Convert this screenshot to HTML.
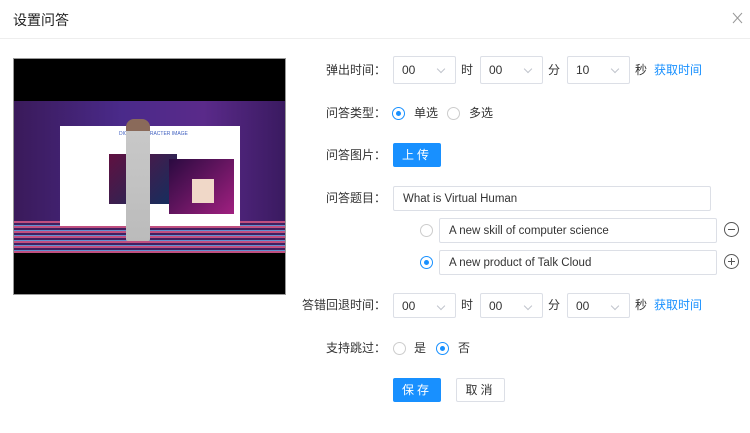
<!DOCTYPE html>
<html><head><meta charset="utf-8"><style>
*{box-sizing:border-box;margin:0;padding:0}
body{width:750px;height:433px;background:#fff;font-family:"Liberation Sans","Noto Sans CJK SC",sans-serif;color:#333;position:relative;overflow:hidden;font-size:12px}
.a{position:absolute}
.title{left:13px;top:10px;font-size:14px;color:#222}
.hr{left:0;top:38px;width:750px;height:1px;background:#eee}
.lbl{text-align:right;width:120px;font-size:12px;color:#333;line-height:14px}
.sel{height:28px;border:1px solid #dcdfe6;border-radius:2px;width:63px;padding-left:8px;display:flex;align-items:center;font-size:12px}
.sel:after{content:"";position:absolute;right:11px;top:9px;width:5px;height:5px;border-right:1px solid #c0c4cc;border-bottom:1px solid #c0c4cc;transform:rotate(45deg)}
.inp{height:25px;border:1px solid #dcdfe6;border-radius:2px;padding-left:9px;display:flex;align-items:center;font-size:11.5px;color:#333}
.rad{width:13px;height:13px;border:1px solid #ccc;border-radius:50%}
.rad.on{border-color:#1890ff}
.rad.on:after{content:"";position:absolute;left:3px;top:3px;width:5px;height:5px;border-radius:50%;background:#1890ff}
.btn{height:24px;line-height:24px;text-align:center;border-radius:2px;font-size:12px;letter-spacing:3px}
.link{color:#1890ff}
.ic{width:15px;height:15px;border:1px solid #555;border-radius:50%}
.t{line-height:14px}
</style></head><body>
<div class="a title">设置问答</div>
<svg class="a" style="left:732px;top:12px" width="11" height="12"><path d="M1 1L10 11M10 1L1 11" stroke="#999" stroke-width="1"/></svg>
<div class="a hr"></div>

<div class="a" style="left:13px;top:58px;width:273px;height:237px;border:1px solid #999;background:#000;overflow:hidden">
 <div class="a" style="left:0;top:42px;width:271px;height:152px;background:linear-gradient(90deg,#3a1a5a,#4a2a8a 40%,#5a2a8a 70%,#3a1a60)"></div>
 <div class="a" style="left:0;top:162px;width:271px;height:32px;background:repeating-linear-gradient(180deg,#c05080 0 2px,#402060 2px 4px,#6090d0 4px 5px)"></div>
 <div class="a" style="left:46px;top:67px;width:180px;height:100px;background:#fff"></div>
 <div class="a" style="left:105px;top:72px;font-size:5px;color:#4060c0">DIGITAL CHARACTER IMAGE</div>
 <div class="a" style="left:95px;top:95px;width:68px;height:50px;background:linear-gradient(135deg,#601040,#103060)"></div>
 <div class="a" style="left:155px;top:100px;width:65px;height:55px;background:linear-gradient(135deg,#2a0a40,#a02080)"></div>
 <div class="a" style="left:112px;top:60px;width:24px;height:122px;border-radius:8px 8px 2px 2px;background:linear-gradient(180deg,#8a6a5a 0 10%,#c8c8c8 10%,#bbb)"></div>
 <div class="a" style="left:178px;top:120px;width:22px;height:24px;background:#f0d8c8"></div>
</div>

<div class="a lbl" style="left:266px;top:63px">弹出时间：</div>
<div class="a sel" style="left:393px;top:56px">00</div>
<div class="a t" style="left:461px;top:63px">时</div>
<div class="a sel" style="left:480px;top:56px">00</div>
<div class="a t" style="left:548px;top:63px">分</div>
<div class="a sel" style="left:567px;top:56px">10</div>
<div class="a t" style="left:635px;top:63px">秒</div>
<div class="a link t" style="left:654px;top:63px">获取时间</div>

<div class="a lbl" style="left:266px;top:106px">问答类型：</div>
<div class="a rad on" style="left:392px;top:107px"></div>
<div class="a t" style="left:414px;top:106px">单选</div>
<div class="a rad" style="left:447px;top:107px"></div>
<div class="a t" style="left:469px;top:106px">多选</div>

<div class="a lbl" style="left:266px;top:148px">问答图片：</div>
<div class="a btn" style="left:393px;top:143px;width:48px;background:#1890ff;color:#fff">上传</div>

<div class="a lbl" style="left:266px;top:191px">问答题目：</div>
<div class="a inp" style="left:393px;top:186px;width:318px">What is Virtual Human</div>
<div class="a rad" style="left:420px;top:224px"></div>
<div class="a inp" style="left:439px;top:218px;width:278px">A new skill of computer science</div>
<div class="a ic" style="left:724px;top:222px"><div class="a" style="left:3px;top:6px;width:7px;height:1px;background:#555"></div></div>
<div class="a rad on" style="left:420px;top:256px"></div>
<div class="a inp" style="left:439px;top:250px;width:278px">A new product of Talk Cloud</div>
<div class="a ic" style="left:724px;top:254px"><div class="a" style="left:3px;top:6px;width:7px;height:1px;background:#555"></div><div class="a" style="left:6px;top:3px;width:1px;height:7px;background:#555"></div></div>

<div class="a lbl" style="left:266px;top:298px">答错回退时间：</div>
<div class="a sel" style="left:393px;top:293px;height:25px">00</div>
<div class="a t" style="left:461px;top:298px">时</div>
<div class="a sel" style="left:480px;top:293px;height:25px">00</div>
<div class="a t" style="left:548px;top:298px">分</div>
<div class="a sel" style="left:567px;top:293px;height:25px">00</div>
<div class="a t" style="left:635px;top:298px">秒</div>
<div class="a link t" style="left:654px;top:298px">获取时间</div>

<div class="a lbl" style="left:266px;top:341px">支持跳过：</div>
<div class="a rad" style="left:393px;top:342px"></div>
<div class="a t" style="left:414px;top:341px">是</div>
<div class="a rad on" style="left:436px;top:342px"></div>
<div class="a t" style="left:458px;top:341px">否</div>

<div class="a btn" style="left:393px;top:378px;width:48px;background:#1890ff;color:#fff">保存</div>
<div class="a btn" style="left:456px;top:378px;width:49px;border:1px solid #dcdfe6;color:#333;line-height:22px">取消</div>
</body></html>
